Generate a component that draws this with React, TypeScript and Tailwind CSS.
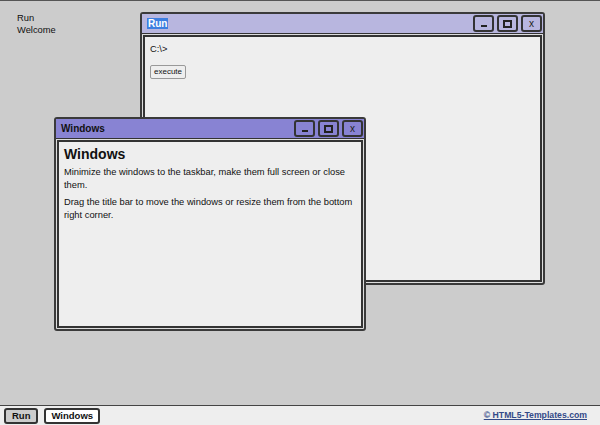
import React from "react";

function TitleButtons() {
	const btn =
		"w-[21px] h-[17px] border-2 border-[#333] rounded-[3px] flex items-center justify-center text-[#222]";
	return (
		<div className="flex gap-[3px] pr-[1px]">
			<div className={btn}>
				<div className="w-[6px] h-[2px] bg-[#222] mt-[4px]" />
			</div>
			<div className={btn}>
				<div className="w-[9px] h-[8px] border-2 border-[#222]" />
			</div>
			<div className={btn}>
				<span className="text-[10px] leading-none">x</span>
			</div>
		</div>
	);
}

function Win(props: {
	title: React.ReactNode;
	active: boolean;
	className: string;
	children: React.ReactNode;
}) {
	return (
		<div
			className={
				"absolute flex flex-col border-2 border-[#3a3a3a] rounded-[3px] bg-[#ddd] " +
				props.className
			}
		>
			<div
				className={
					"h-[20px] flex items-center justify-between pl-[5px] border-b border-[#333] " +
					(props.active ? "bg-[#8883d3]" : "bg-[#b8b6df]")
				}
			>
				<div className="text-[10px] font-bold">{props.title}</div>
				<TitleButtons />
			</div>
			<div className="flex-1 m-[1px] border-2 border-[#333] bg-[#eee] px-[5px] overflow-hidden">
				{props.children}
			</div>
		</div>
	);
}

export default function App() {
	return (
		<div className="h-[425px] w-full flex flex-col bg-[#ccc] border-t border-[#555] font-['Liberation_Sans',Arial,sans-serif] text-[#111] text-[9.33px] leading-[13px]">
			<div className="flex-1 relative">
				<div className="absolute left-[17px] top-[11px] leading-[12px]">
					<div>Run</div>
					<div>Welcome</div>
				</div>

				<Win
					active={false}
					className="left-[140px] top-[11px] w-[405px] h-[273px]"
					title={
						<span className="bg-[#3d7fe0] text-white px-[1px]">Run</span>
					}
				>
					<div className="mt-[6px]">C:\&gt;</div>
					<button className="mt-[9px] text-[8px] leading-none px-[3px] py-[2px] border border-[#999] rounded-[2px] bg-[#eee]">
						execute
					</button>
				</Win>

				<Win
					active={true}
					className="left-[54px] top-[116px] w-[312px] h-[214px]"
					title={<span className="text-[#111]">Windows</span>}
				>
					<h1 className="text-[14px] font-bold mt-[4px] leading-[16px]">
						Windows
					</h1>
					<p className="mt-[4px]">
						Minimize the windows to the taskbar, make them full screen or close
						them.
					</p>
					<p className="mt-[4px]">
						Drag the title bar to move the windows or resize them from the
						bottom right corner.
					</p>
				</Win>
			</div>
			<div className="h-[20px] border-t border-[#444] bg-[#eee] flex items-center justify-between px-[4px]">
				<div className="flex gap-[6px]">
					<div className="h-[16px] px-[6px] border-2 border-[#333] rounded-[3px] bg-[#ccc] text-[9.5px] font-bold flex items-center">
						Run
					</div>
					<div className="h-[16px] px-[5px] border-2 border-[#333] rounded-[3px] bg-white text-[9.5px] font-bold flex items-center">
						Windows
					</div>
				</div>
				<a
					href="#"
					className="text-[8.7px] font-bold underline text-[#334a88] pr-[9px]"
				>
					© HTML5-Templates.com
				</a>
			</div>
		</div>
	);
}
